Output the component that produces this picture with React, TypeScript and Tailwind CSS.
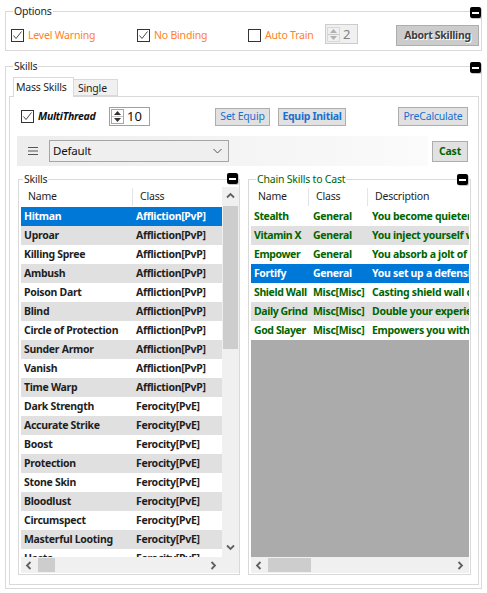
import React from "react";

const skills: [string, string][] = [
    ["Hitman", "Affliction[PvP]"],
    ["Uproar", "Affliction[PvP]"],
    ["Killing Spree", "Affliction[PvP]"],
    ["Ambush", "Affliction[PvP]"],
    ["Poison Dart", "Affliction[PvP]"],
    ["Blind", "Affliction[PvP]"],
    ["Circle of Protection", "Affliction[PvP]"],
    ["Sunder Armor", "Affliction[PvP]"],
    ["Vanish", "Affliction[PvP]"],
    ["Time Warp", "Affliction[PvP]"],
    ["Dark Strength", "Ferocity[PvE]"],
    ["Accurate Strike", "Ferocity[PvE]"],
    ["Boost", "Ferocity[PvE]"],
    ["Protection", "Ferocity[PvE]"],
    ["Stone Skin", "Ferocity[PvE]"],
    ["Bloodlust", "Ferocity[PvE]"],
    ["Circumspect", "Ferocity[PvE]"],
    ["Masterful Looting", "Ferocity[PvE]"],
    ["Haste", "Ferocity[PvE]"],
];

const chain: [string, string, string][] = [
    ["Stealth", "General", "You become quieter, harder to notice"],
    ["Vitamin X", "General", "You inject yourself with vitamins"],
    ["Empower", "General", "You absorb a jolt of energy"],
    ["Fortify", "General", "You set up a defensive stance"],
    ["Shield Wall", "Misc[Misc]", "Casting shield wall does reduce damage"],
    ["Daily Grind", "Misc[Misc]", "Double your experience for a while"],
    ["God Slayer", "Misc[Misc]", "Empowers you with the strength of gods"],
];

const Check = ({ checked }: { checked: boolean }) => (
    <span className="w-[13px] h-[13px] border border-[#333333] bg-white flex items-center justify-center shrink-0">
        {checked && (
            <svg width="11" height="11" viewBox="0 0 11 11">
                <polyline points="1.5,5.5 4,8.5 9.5,1.5" fill="none" stroke="#4a4a4a" strokeWidth="1" />
            </svg>
        )}
    </span>
);

const Collapse = ({ className }: { className: string }) => (
    <span className={"absolute w-[11px] h-[11px] rounded-[2px] bg-black flex items-center justify-center shadow-[1px_1px_0_#c8c8c8] " + className}>
        <span className="w-[7px] h-[2px] bg-white" />
    </span>
);

const Chevron = ({ dir }: { dir: "up" | "down" | "left" | "right" }) => {
    const pts = {
        up: "1,5.5 4.5,2 8,5.5",
        down: "1,2.5 4.5,6 8,2.5",
        left: "5.5,1 2,4.5 5.5,8",
        right: "2.5,1 6,4.5 2.5,8",
    }[dir];
    return (
        <svg width="9" height="9" viewBox="0 0 9 9">
            <polyline points={pts} fill="none" stroke="#606060" strokeWidth="1.8" />
        </svg>
    );
};

const Spinner = ({ value, disabled, className }: { value: string; disabled?: boolean; className: string }) => (
    <div className={"flex items-center border " + (disabled ? "border-[#cccccc] bg-[#f0f0f0] " : "border-[#a0a0a0] bg-white ") + className}>
        <div className={"ml-[1px] w-[13px] h-[15px] flex flex-col border " + (disabled ? "border-[#d8d8d8]" : "border-[#a8a8a8]")}>
            <div className="flex-1 flex items-center justify-center border-b border-[#c8c8c8]">
                <svg width="7" height="4" viewBox="0 0 7 4"><polygon points="0,4 3.5,0 7,4" fill={disabled ? "#b0b0b0" : "#333"} /></svg>
            </div>
            <div className="flex-1 flex items-center justify-center">
                <svg width="7" height="4" viewBox="0 0 7 4"><polygon points="0,0 3.5,4 7,0" fill={disabled ? "#b0b0b0" : "#333"} /></svg>
            </div>
        </div>
        <span className={"ml-[3px] text-[13px] leading-none tracking-normal " + (disabled ? "text-[#808080]" : "text-[#111]")}>{value}</span>
    </div>
);

const Btn = ({ children, className }: { children: React.ReactNode; className: string }) => (
    <div className={"flex items-center justify-center border border-[#adadad] bg-[#e1e1e1] leading-none " + className}>
        {children}
    </div>
);

const Group = ({
    title,
    titleClass,
    className,
    btnClass,
    children,
}: {
    title: string;
    titleClass: string;
    className: string;
    btnClass: string;
    children: React.ReactNode;
}) => (
    <div className={"relative border border-[#d9d9d9] " + className}>
        <span className={"absolute -top-[9px] bg-white px-[1px] leading-[16px] " + titleClass}>{title}</span>
        <Collapse className={btnClass} />
        {children}
    </div>
);

export default function App() {
    return (
        <div className="w-[487px] h-[593px] bg-white px-[5px] pt-[11px] font-['Noto_Sans',sans-serif] text-[10.5px] tracking-[-0.2px] text-[#1e1e1e] overflow-hidden">
            {/* Options */}
            <Group title="Options" titleClass="left-[7px]" className="h-[40px]" btnClass="left-[464px] -top-[5px]">
                <div className="flex items-center h-[21px] mt-[13px] pl-[5px] text-[#ff7f27]">
                    <div className="w-[126px] flex items-center">
                        <Check checked />
                        <span className="ml-[4px]">Level Warning</span>
                    </div>
                    <div className="w-[111px] flex items-center">
                        <Check checked />
                        <span className="ml-[4px]">No Binding</span>
                    </div>
                    <div className="w-[77px] flex items-center">
                        <Check checked={false} />
                        <span className="ml-[4px]">Auto Train</span>
                    </div>
                    <Spinner value="2" disabled className="w-[33px] h-[20px] -mt-[3px]" />
                    <div className="ml-[38px] w-[83px] h-[21px] flex items-center justify-center border border-[#adadad] bg-[#cccccc] font-bold tracking-[-0.3px] text-[#404040] [text-shadow:1px_1px_0_#ffffff]">
                        Abort Skilling
                    </div>
                </div>
            </Group>

            {/* Skills */}
            <Group title="Skills" titleClass="left-[7px]" className="mt-[15px] h-[523px] pt-[10px] pl-[3px]" btnClass="left-[464px] -top-[5px]">
                {/* tabs */}
                <div className="flex items-end h-[19px] ml-[4px]">
                    <div className="relative z-10 w-[61px] h-[20px] -mb-[1px] border border-b-0 border-[#d9d9d9] bg-white pl-[2px] pt-[1px] leading-[16px]">
                        Mass Skills
                    </div>
                    <div className="w-[44px] h-[17px] border border-l-0 border-[#d9d9d9] bg-[#f0f0f0] pl-[4px] leading-[16px]">
                        Single
                    </div>
                </div>
                <div className="w-[470px] h-[489px] border border-[#d9d9d9] bg-white">
                    {/* row 1 */}
                    <div className="flex items-center h-[19px] mt-[10px] pl-[11px]">
                        <div className="w-[88px] flex items-center">
                            <Check checked />
                            <span className="ml-[4px] font-bold italic tracking-[-0.3px] text-[#111]">MultiThread</span>
                        </div>
                        <Spinner value="10" className="w-[41px] h-[19px]" />
                        <Btn className="ml-[65px] w-[55px] h-[18px] text-[#1a6fd0]">Set Equip</Btn>
                        <Btn className="ml-[8px] w-[68px] h-[18px] text-[#1a6fd0] font-bold tracking-[-0.3px]">Equip Initial</Btn>
                        <Btn className="ml-[52px] w-[70px] h-[19px] text-[#1a6fd0]">PreCalculate</Btn>
                    </div>

                    {/* row 2 */}
                    <div className="flex items-center h-[30px] mt-[10px]">
                        <div className="ml-[7px] w-[411px] h-[30px] flex items-center pl-[11px] bg-linear-to-r from-[#ededed] to-[#fbfbfb]">
                            <svg width="10" height="10" viewBox="0 0 10 10">
                                <line x1="0" y1="1.5" x2="10" y2="1.5" stroke="#555" strokeWidth="1" />
                                <line x1="0" y1="5" x2="10" y2="5" stroke="#555" strokeWidth="1" />
                                <line x1="0" y1="8.5" x2="10" y2="8.5" stroke="#555" strokeWidth="1" />
                            </svg>
                            <div className="ml-[11px] w-[180px] h-[22px] flex items-center justify-between border border-[#a5a5a5] bg-[#efefef] pl-[3px] pr-[6px]">
                                <span className="text-[11.5px] text-[#111]">Default</span>
                                <svg width="9" height="6" viewBox="0 0 9 6">
                                    <polyline points="0.5,1 4.5,5 8.5,1" fill="none" stroke="#555" strokeWidth="1" />
                                </svg>
                            </div>
                        </div>
                        <Btn className="ml-[4px] w-[36px] h-[21px] font-bold text-[#006400]">Cast</Btn>
                    </div>

                    {/* row 3 */}
                    <div className="flex mt-[13px] ml-[8px] gap-[8px]">
                        {/* skills list */}
                        <Group title="Skills" titleClass="left-[4px] text-[#1e1e1e]" className="w-[222px] h-[396px] pl-[2px] pt-[7px]" btnClass="left-[208px] -top-[7px]">
                            <div className="grid grid-cols-[201px_17px] grid-rows-[370px_16px] w-[218px]">
                                <div className="overflow-hidden bg-white">
                                    <div className="flex h-[20px] items-center">
                                        <div className="w-[112px] h-[18px] flex items-center pl-[7px] border-r border-[#e5e5e5]">Name</div>
                                        <div className="pl-[7px]">Class</div>
                                    </div>
                                    {skills.map(([n, c], i) => (
                                        <div
                                            key={n}
                                            className={
                                                "flex h-[19px] items-center font-bold tracking-[-0.3px] whitespace-nowrap " +
                                                (i === 0 ? "bg-[#0078d7] text-white" : i % 2 === 1 ? "bg-[#e0e0e0]" : "bg-white")
                                            }
                                        >
                                            <div className="w-[112px] pl-[3px]">{n}</div>
                                            <div className="pl-[3px]">{c}</div>
                                        </div>
                                    ))}
                                </div>
                                <div className="bg-[#f0f0f0] flex flex-col">
                                    <div className="h-[19px] flex items-center justify-center"><Chevron dir="up" /></div>
                                    <div className="ml-[1px] w-[15px] h-[143px] bg-[#cdcdcd]" />
                                    <div className="flex-1" />
                                    <div className="h-[19px] flex items-center justify-center"><Chevron dir="down" /></div>
                                </div>
                                <div className="bg-[#f0f0f0] flex items-center">
                                    <div className="w-[17px] flex justify-center"><Chevron dir="left" /></div>
                                    <div className="w-[17px] h-[14px] bg-[#cdcdcd]" />
                                    <div className="flex-1" />
                                    <div className="w-[17px] flex justify-center"><Chevron dir="right" /></div>
                                </div>
                                <div className="bg-[#f0f0f0]" />
                            </div>
                        </Group>

                        {/* chain list */}
                        <Group title="Chain Skills to Cast" titleClass="left-[7px] text-[#006400]" className="w-[223px] h-[396px] pl-[2px] pt-[7px]" btnClass="left-[208px] -top-[6px]">
                            <div className="w-[218px] h-[386px] flex flex-col">
                                <div className="h-[370px] flex flex-col overflow-hidden bg-white">
                                    <div className="flex h-[20px] shrink-0 items-center">
                                        <div className="w-[58px] h-[18px] flex items-center pl-[7px] border-r border-[#e5e5e5]">Name</div>
                                        <div className="w-[59px] h-[18px] flex items-center pl-[7px] border-r border-[#e5e5e5]">Class</div>
                                        <div className="pl-[7px]">Description</div>
                                    </div>
                                    {chain.map(([n, c, d], i) => (
                                        <div
                                            key={n}
                                            className={
                                                "flex h-[19px] shrink-0 items-center font-bold tracking-[-0.3px] whitespace-nowrap overflow-hidden " +
                                                (i === 3 ? "bg-[#0078d7] text-white" : i % 2 === 1 ? "bg-[#e0e0e0] text-[#006400]" : "bg-white text-[#006400]")
                                            }
                                        >
                                            <div className="w-[58px] shrink-0 pl-[3px] tracking-[-0.4px]">{n}</div>
                                            <div className="w-[59px] shrink-0 pl-[4px]">{c}</div>
                                            <div className="pl-[4px]">{d}</div>
                                        </div>
                                    ))}
                                    <div className="flex-1 bg-[#ababab]" />
                                </div>
                                <div className="h-[16px] bg-[#f0f0f0] flex items-center">
                                    <div className="w-[17px] flex justify-center"><Chevron dir="left" /></div>
                                    <div className="w-[43px] h-[14px] bg-[#cdcdcd]" />
                                    <div className="flex-1" />
                                    <div className="w-[17px] flex justify-center"><Chevron dir="right" /></div>
                                </div>
                            </div>
                        </Group>
                    </div>
                </div>
            </Group>
        </div>
    );
}
